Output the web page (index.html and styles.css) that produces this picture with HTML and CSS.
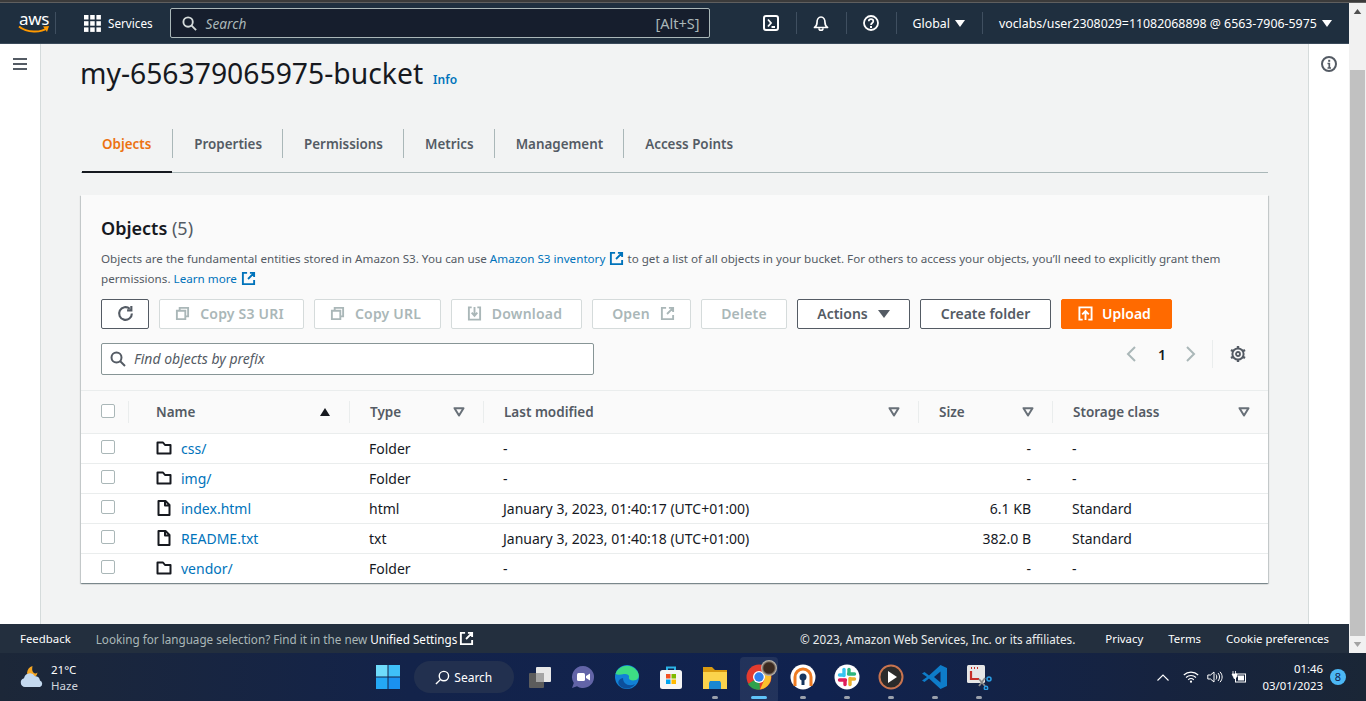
FILE: index.html
```html
<!DOCTYPE html>
<html lang="en">
<head>
<meta charset="utf-8">
<title>my-656379065975-bucket</title>
<link rel="stylesheet" href="styles.css">
</head>
<body>
<svg class="defs" width="0" height="0" aria-hidden="true">
  <symbol id="ext" viewBox="0 0 16 16"><path d="M6.500 2H2v12h12V9.500M9.500 2H14v4.500M14 2L7.500 8.500" fill="none" stroke="currentColor" stroke-width="2"/></symbol>
  <symbol id="folder" viewBox="0 0 16 16"><path d="M1.500 2.500h5.500l2 2.500h5.500v8.500H1.500z" fill="none" stroke="#16191f" stroke-width="2" stroke-linejoin="round"/></symbol>
  <symbol id="file" viewBox="0 0 16 16"><path d="M2.500 1h7l4 4v10h-11zM9 1v4.500h4.500" fill="none" stroke="#16191f" stroke-width="2" stroke-linejoin="round"/></symbol>
  <symbol id="copy" viewBox="0 0 16 16"><path d="M5 5V2h9v9h-3M2 5h9v9H2z" fill="none" stroke="currentColor" stroke-width="2"/></symbol>
  <symbol id="filter" viewBox="0 0 12 10"><path d="M1.500 1.200h9L6 8.500z" fill="none" stroke="#687078" stroke-width="2" stroke-linejoin="round"/></symbol>
</svg>
<div class="screen">
  <div class="strip"></div>
  <div class="browser">
    <div class="app">
      <header class="nav">
        <div class="logo"><span class="logo-text">aws</span><svg class="smile" viewBox="0 0 32 10" width="32" height="10"><path d="M1 1.500C9 8 23 8 29 3" fill="none" stroke="#f90" stroke-width="2"/><path d="M25 1.500l6-.5-2 6z" fill="#f90"/></svg></div>
        <div class="nav-sep logo-sep"></div>
        <svg class="grid-icon" viewBox="0 0 17 17" width="17" height="17"><g fill="#fff"><rect width="4.500" height="4.500"/><rect x="6.200" width="4.500" height="4.500"/><rect x="12.400" width="4.500" height="4.500"/><rect y="6.200" width="4.500" height="4.500"/><rect x="6.200" y="6.200" width="4.500" height="4.500"/><rect x="12.400" y="6.200" width="4.500" height="4.500"/><rect y="12.400" width="4.500" height="4.500"/><rect x="6.200" y="12.400" width="4.500" height="4.500"/><rect x="12.400" y="12.400" width="4.500" height="4.500"/></g></svg>
        <span class="nav-link services">Services</span>
        <div class="nav-search">
          <svg viewBox="0 0 16 16" width="15" height="15"><circle cx="6.500" cy="6.500" r="5" fill="none" stroke="#d5dbdb" stroke-width="2"/><path d="M10 10l5 5" stroke="#d5dbdb" stroke-width="2"/></svg>
          <span class="nav-search-text">Search</span>
          <span class="nav-search-key">[Alt+S]</span>
        </div>
        <div class="nav-right">
          <span class="nav-icon"><svg viewBox="0 0 16 16" width="16" height="16"><rect x="1" y="1" width="14" height="14" rx="2" fill="none" stroke="#fff" stroke-width="2"/><path d="M5 4.500L8 8l-3 3.500M8.500 12H12" fill="none" stroke="#fff" stroke-width="1.800"/></svg></span>
          <div class="nav-sep"></div>
          <span class="nav-icon"><svg viewBox="0 0 16 16" width="16" height="16"><path d="M1.500 12.500c1.500-1 2.500-2 2.500-5 0-3 1.500-5.500 4-5.500s4 2.500 4 5.500c0 3 1 4 2.500 5zM6 13.500c0 2.500 4 2.500 4 0" fill="none" stroke="#fff" stroke-width="1.700" stroke-linejoin="round"/></svg></span>
          <div class="nav-sep"></div>
          <span class="nav-icon"><svg viewBox="0 0 16 16" width="16" height="16"><circle cx="8" cy="8" r="7" fill="none" stroke="#fff" stroke-width="1.800"/><path d="M5.800 6.200C5.800 3.500 10.300 3.500 10.300 6.200c0 1.800-2.300 1.800-2.300 3.800" fill="none" stroke="#fff" stroke-width="1.700"/><rect x="7" y="11" width="2" height="2" fill="#fff"/></svg></span>
          <div class="nav-sep"></div>
          <span class="nav-link region">Global<i class="caret"></i></span>
          <div class="nav-sep"></div>
          <span class="nav-link user">voclabs/user2308029=11082068898 @ 6563-7906-5975<i class="caret"></i></span>
        </div>
      </header>
      <div class="body">
        <aside class="rail rail-left">
          <svg viewBox="0 0 14 12" width="14" height="12"><path d="M0 1h14M0 6h14M0 11h14" stroke="#545b64" stroke-width="2"/></svg>
        </aside>
        <main class="content">
          <div class="title-row">
            <h1 class="title">my-656379065975-bucket</h1>
            <a class="info">Info</a>
          </div>
          <nav class="tabs">
            <span class="tab active">Objects</span>
            <span class="tab">Properties</span>
            <span class="tab">Permissions</span>
            <span class="tab">Metrics</span>
            <span class="tab">Management</span>
            <span class="tab">Access Points</span>
          </nav>
          <section class="card">
            <div class="card-head">
              <h2 class="card-title">Objects <span class="count">(5)</span></h2>
              <p class="desc">Objects are the fundamental entities stored in Amazon S3. You can use <a class="link">Amazon S3 inventory <svg class="ext-icon" width="15" height="15"><use href="#ext"/></svg></a> to get a list of all objects in your bucket. For others to access your objects, you’ll need to explicitly grant them permissions. <a class="link">Learn more <svg class="ext-icon" width="15" height="15"><use href="#ext"/></svg></a></p>
              <div class="toolbar">
                <button class="btn b-refresh"><svg viewBox="0 0 16 16" width="17" height="17"><path d="M14 8a6 6 0 1 1-2-4.500" fill="none" stroke="#545b64" stroke-width="2"/><path d="M13.500 1v4h-4" fill="none" stroke="#545b64" stroke-width="2"/></svg></button>
                <button class="btn off b-s3"><svg width="15" height="15"><use href="#copy"/></svg>Copy S3 URI</button>
                <button class="btn off b-url"><svg width="15" height="15"><use href="#copy"/></svg>Copy URL</button>
                <button class="btn off b-dl"><svg viewBox="0 0 16 16" width="15" height="15"><path d="M5 1.500H2v13h12v-13h-3M8 1v9M5 7l3 3.500L11 7" fill="none" stroke="currentColor" stroke-width="2"/></svg>Download</button>
                <button class="btn off b-open">Open<svg width="15" height="15"><use href="#ext"/></svg></button>
                <button class="btn off b-del">Delete</button>
                <button class="btn b-act">Actions<i class="caret dark"></i></button>
                <button class="btn b-new">Create folder</button>
                <button class="btn primary b-up"><svg viewBox="0 0 16 16" width="15" height="15"><path d="M5 14.500H1.500v-13h13v13H11M8 15V6M4.500 9L8 5.500 11.500 9" fill="none" stroke="#fff" stroke-width="2"/></svg>Upload</button>
              </div>
              <div class="filter-row">
                <div class="filter">
                  <svg viewBox="0 0 16 16" width="16" height="16"><circle cx="6.500" cy="6.500" r="5" fill="none" stroke="#545b64" stroke-width="2"/><path d="M10 10l5 5" stroke="#545b64" stroke-width="2"/></svg>
                  <span>Find objects by prefix</span>
                </div>
                <div class="pager">
                  <svg viewBox="0 0 10 16" width="10" height="16"><path d="M9 1L2 8l7 7" fill="none" stroke="#aab7b8" stroke-width="2"/></svg>
                  <span class="page">1</span>
                  <svg viewBox="0 0 10 16" width="10" height="16"><path d="M1 1l7 7-7 7" fill="none" stroke="#aab7b8" stroke-width="2"/></svg>
                  <div class="pager-sep"></div>
                  <svg class="gear" viewBox="0 0 16 16" width="16" height="16"><circle cx="8" cy="8" r="2" fill="none" stroke="#545b64" stroke-width="1.800"/><circle cx="8" cy="8" r="5.600" fill="none" stroke="#545b64" stroke-width="2"/><path d="M8 0v2.500M8 13.500V16M1 4l2.200 1.300M12.800 10.700L15 12M1 12l2.200-1.300M12.800 5.300L15 4" stroke="#545b64" stroke-width="2.400"/></svg>
                </div>
              </div>
            </div>
            <table class="objects">
              <colgroup><col class="c-check"><col class="c-name"><col class="c-type"><col class="c-date"><col class="c-size"><col class="c-class"></colgroup>
              <thead>
                <tr>
                  <th><i class="box"></i></th>
                  <th><div class="th"><span>Name</span><i class="sort"></i></div></th>
                  <th><div class="th"><span>Type</span><svg width="12" height="10"><use href="#filter"/></svg></div></th>
                  <th><div class="th"><span>Last modified</span><svg width="12" height="10"><use href="#filter"/></svg></div></th>
                  <th><div class="th"><span>Size</span><svg width="12" height="10"><use href="#filter"/></svg></div></th>
                  <th><div class="th"><span>Storage class</span><svg width="12" height="10"><use href="#filter"/></svg></div></th>
                </tr>
              </thead>
              <tbody>
                <tr><td><i class="box"></i></td><td><div class="cell-name"><svg width="16" height="16"><use href="#folder"/></svg><a class="link">css/</a></div></td><td>Folder</td><td>-</td><td class="num">-</td><td>-</td></tr>
                <tr><td><i class="box"></i></td><td><div class="cell-name"><svg width="16" height="16"><use href="#folder"/></svg><a class="link">img/</a></div></td><td>Folder</td><td>-</td><td class="num">-</td><td>-</td></tr>
                <tr><td><i class="box"></i></td><td><div class="cell-name"><svg width="16" height="16"><use href="#file"/></svg><a class="link">index.html</a></div></td><td>html</td><td>January 3, 2023, 01:40:17 (UTC+01:00)</td><td class="num">6.1 KB</td><td>Standard</td></tr>
                <tr><td><i class="box"></i></td><td><div class="cell-name"><svg width="16" height="16"><use href="#file"/></svg><a class="link">README.txt</a></div></td><td>txt</td><td>January 3, 2023, 01:40:18 (UTC+01:00)</td><td class="num">382.0 B</td><td>Standard</td></tr>
                <tr><td><i class="box"></i></td><td><div class="cell-name"><svg width="16" height="16"><use href="#folder"/></svg><a class="link">vendor/</a></div></td><td>Folder</td><td>-</td><td class="num">-</td><td>-</td></tr>
              </tbody>
            </table>
          </section>
        </main>
        <aside class="rail rail-right">
          <svg viewBox="0 0 16 16" width="16" height="16"><circle cx="8" cy="8" r="7" fill="none" stroke="#545b64" stroke-width="2"/><path d="M6.500 7.500H8.300V12M6.500 12h3.500" fill="none" stroke="#545b64" stroke-width="1.700"/><rect x="7.200" y="3.800" width="2" height="2" fill="#545b64"/></svg>
        </aside>
      </div>
      <footer class="foot">
        <span class="foot-link feedback">Feedback</span>
        <span class="foot-note">Looking for language selection? Find it in the new <span class="foot-link">Unified Settings</span></span>
        <svg class="foot-ext" width="15" height="15"><use href="#ext"/></svg>
        <span class="foot-copy">© 2023, Amazon Web Services, Inc. or its affiliates.</span>
        <span class="foot-link">Privacy</span>
        <span class="foot-link">Terms</span>
        <span class="foot-link">Cookie preferences</span>
      </footer>
    </div>
    <div class="scrollbar">
      <svg class="arrow" viewBox="0 0 9 6" width="9" height="6"><path d="M4.500 0L9 6H0z" fill="#505050"/></svg>
      <div class="track"><div class="thumb"></div></div>
      <svg class="arrow" viewBox="0 0 9 6" width="9" height="6"><path d="M0 0h9L4.500 6z" fill="#a3a3a3"/></svg>
    </div>
  </div>
  <div class="taskbar">
    <div class="weather">
      <svg viewBox="0 0 26 26" width="26" height="26"><path d="M8 9a6.500 6.500 0 0 0 5 5c3 0 5-2 5.500-5.500-2 1.500-3.500 1-4.500-.5s-1-3-.5-6C10 3 8.500 5.500 8 9z" fill="#f5a623"/><path d="M6 23a4.500 4.500 0 0 1-1-8.800 6 6 0 0 1 11-2 5 5 0 0 1 5 4.300A3.500 3.500 0 0 1 21 23z" fill="#c4d9ef"/></svg>
      <div class="weather-text"><span>21°C</span><span class="haze">Haze</span></div>
    </div>
    <div class="dock">
      <svg class="dock-win" viewBox="0 0 24 24" width="24" height="24"><rect width="11.500" height="11.500" fill="#6fdcfb"/><rect x="12.500" width="11.500" height="11.500" fill="#3fc0f8"/><rect y="12.500" width="11.500" height="11.500" fill="#24a8f5"/><rect x="12.500" y="12.500" width="11.500" height="11.500" fill="#1a91f0"/></svg>
      <div class="pill"><svg viewBox="0 0 16 16" width="15" height="15"><circle cx="9.500" cy="6.500" r="5" fill="none" stroke="#fff" stroke-width="1.500"/><path d="M6 10l-5 5" stroke="#fff" stroke-width="1.500"/></svg><span>Search</span></div>
      <span class="app-icon"><svg viewBox="0 0 26 26" width="26" height="26"><rect x="9" y="3" width="15" height="15" rx="1" fill="#e8e8e8"/><rect x="2" y="9" width="15" height="15" rx="1" fill="#5c5c5c"/><rect x="9" y="9" width="8" height="9" fill="#a5a5a5"/></svg></span>
      <span class="app-icon"><svg viewBox="0 0 26 26" width="26" height="26"><path d="M13 2a11 11 0 1 1-6 20.200L2 24l1.800-5A11 11 0 0 1 13 2z" fill="#6264a7"/><rect x="7" y="9" width="8" height="8" rx="1.500" fill="#fff"/><path d="M16 12l4-2.500v7L16 14z" fill="#fff"/></svg></span>
      <span class="app-icon"><svg viewBox="0 0 26 26" width="26" height="26"><circle cx="13" cy="13" r="12" fill="#1281d6"/><path d="M1.500 10C4 2 16-2 23 7c2.500 3 2.500 8-1 9-4 1-8 0-7-3 .5-2-2-3.500-5-3-3 .5-6 1.500-8.500 0z" fill="#3ddc84"/><path d="M9 14c0 6 6 9 12 6-3 5-11 6-15 2-3-3-2-7 3-8z" fill="#0c4f9c"/></svg></span>
      <span class="app-icon"><svg viewBox="0 0 26 26" width="26" height="26"><path d="M9 7V3.500h8V7" fill="none" stroke="#2bb3e8" stroke-width="2"/><rect x="2" y="6" width="22" height="19" rx="2.500" fill="#f5f5f5"/><rect x="8" y="10" width="4.500" height="4.500" fill="#f25022"/><rect x="13.500" y="10" width="4.500" height="4.500" fill="#7fba00"/><rect x="8" y="15.500" width="4.500" height="4.500" fill="#00a4ef"/><rect x="13.500" y="15.500" width="4.500" height="4.500" fill="#ffb900"/></svg></span>
      <span class="app-icon"><svg viewBox="0 0 26 26" width="26" height="26"><path d="M1 3h9l3 3h12v19H1z" fill="#d99a10"/><path d="M1 8h24v17H1z" fill="#fbd34c"/><path d="M8 17h10l1 2v6H7v-6z" fill="#1a87d1"/></svg><i class="dot"></i></span>
      <span class="app-icon active"><svg viewBox="0 0 26 26" width="26" height="26"><circle cx="13" cy="13" r="12.500" fill="#e33b2e"/><path d="M13 13L2 20A12.500 12.500 0 0 0 14 25.500z" fill="#2fa24b"/><path d="M13 8h11A12.500 12.500 0 0 1 14 25.500L19 14z" fill="#fbc02d"/><circle cx="13" cy="13" r="6" fill="#fff"/><circle cx="13" cy="13" r="4.700" fill="#2f80ed"/></svg><i class="avatar"></i><i class="dot wide"></i></span>
      <span class="app-icon"><svg viewBox="0 0 26 26" width="26" height="26"><circle cx="13" cy="13" r="12.500" fill="#fff"/><path d="M5 22V13a8 8 0 0 1 16 0v9" fill="none" stroke="#ee7b22" stroke-width="3"/><circle cx="13" cy="13" r="3.500" fill="#16355e"/><rect x="11.500" y="14" width="3" height="7" fill="#16355e"/></svg><i class="dot"></i></span>
      <span class="app-icon"><svg viewBox="0 0 26 26" width="26" height="26"><circle cx="13" cy="13" r="12.500" fill="#fff"/><g stroke-width="3.400" stroke-linecap="round" fill="none"><path d="M10 5.500v6" stroke="#36c5f0"/><path d="M5.500 11h4" stroke="#36c5f0"/><path d="M20.500 10h-6" stroke="#2eb67d"/><path d="M15 5.500v4" stroke="#2eb67d"/><path d="M16 20.500v-6" stroke="#ecb22e"/><path d="M20.500 15h-4" stroke="#ecb22e"/><path d="M5.500 16h6" stroke="#e01e5a"/><path d="M11 20.500v-4" stroke="#e01e5a"/></g></svg><i class="dot"></i></span>
      <span class="app-icon"><svg viewBox="0 0 26 26" width="26" height="26"><circle cx="13" cy="13" r="11.500" fill="#2b2b2b" stroke="#c9744f" stroke-width="2"/><path d="M10 7l9 6-9 6z" fill="#fff"/></svg><i class="dot"></i></span>
      <span class="app-icon"><svg viewBox="0 0 26 26" width="26" height="26"><path d="M18.500 1L25 4v18l-6.500 3L7 14.500 2.500 18 0 16.500 5 13 0 9.500 2.500 8 7 11.500z" fill="#0e7cc9"/><path d="M18.500 7.500L12 13l6.500 5.500z" fill="#0f2350"/></svg><i class="dot"></i></span>
      <span class="app-icon"><svg viewBox="0 0 26 26" width="26" height="26"><rect x="1" y="1" width="18" height="18" rx="1.500" fill="#e6e6e6"/><path d="M5 4h1M8 4h1M11 4h1M5 7v8h8" stroke="#c62f28" stroke-width="2.200" fill="none"/><path d="M13 15l6 7M19 14l-6 8" stroke="#8a8a8a" stroke-width="1.800"/><circle cx="23" cy="15" r="2" fill="none" stroke="#2b9fe6" stroke-width="1.500"/><circle cx="20" cy="24" r="1.700" fill="none" stroke="#2b9fe6" stroke-width="1.500"/></svg><i class="dot"></i></span>
    </div>
    <div class="tray">
      <svg class="chev" viewBox="0 0 12 7" width="12" height="7"><path d="M.5 6.500L6 1l5.500 5.500" fill="none" stroke="#fff" stroke-width="1.100"/></svg>
      <svg viewBox="0 0 16 12" width="16" height="12"><path d="M.8 4a10.500 10.500 0 0 1 14.400 0M3 6.500a7.300 7.300 0 0 1 10 0M5.200 8.800a4 4 0 0 1 5.600 0" fill="none" stroke="#fff" stroke-width="1.100"/><circle cx="8" cy="10.700" r="1.100" fill="#fff"/></svg>
      <svg viewBox="0 0 16 12" width="16" height="12"><path d="M.8 4H3.500L7 1v10L3.500 8H.8z" fill="none" stroke="#fff"/><path d="M9 3.500c1 1.500 1 3.500 0 5M11 2c2 2.500 2 5.500 0 8M13 .8c2.800 3 2.800 7.400 0 10.400" fill="none" stroke="#fff"/></svg>
      <svg viewBox="0 0 16 12" width="16" height="12"><path d="M2 0v3M4.500 0v3M1 3h5v2.500L3.500 8z" fill="#fff" stroke="#fff" stroke-width=".8"/><rect x="4.500" y="3" width="10" height="8" fill="none" stroke="#fff"/><rect x="7" y="4.500" width="6" height="5" fill="#fff"/></svg>
      <div class="clock"><span>01:46</span><span>03/01/2023</span></div>
      <span class="badge">8</span>
    </div>
  </div>
</div>
</body>
</html>
```
FILE: styles.css
```css
* { box-sizing: border-box; }
html, body { margin: 0; height: 100%; overflow: hidden; }
body { font-family: "Noto Sans", "Open Sans", sans-serif; color: #16191f; font-size: 14px; background: #fff; }
.defs { position: absolute; }
a { color: #0073bb; text-decoration: none; }
i { display: block; }
.screen { height: 701px; display: flex; flex-direction: column; }
.strip { height: 3px; background: #3b3b3b; border-bottom: 1px solid #5f5f5f; flex: none; }
.browser { height: 650px; display: flex; flex: none; }
.app { flex: 1; min-width: 0; display: flex; flex-direction: column; }

.nav { height: 41px; flex: none; background: #1f2f3f; border-bottom: 1px solid #3a4a5a; display: flex; align-items: center; color: #fff; padding-left: 18px; }
.logo { width: 32px; display: flex; flex-direction: column; align-items: center; }
.logo-text { font-size: 17px; line-height: 13px; height: 14px; letter-spacing: -.3px; }
.smile { margin-top: -1px; }
.nav-sep { width: 1px; height: 22px; background: #3f4f60; flex: none; }
.logo-sep { margin: 0 28px 0 5px; }
.grid-icon { flex: none; }
.nav-link { font-size: 12.350px; white-space: nowrap; display: flex; align-items: center; }
.services { margin: 0 17px 0 7px; font-size: 11.700px; }
.nav-search { width: 540px; height: 30px; background: #161e2d; border: 1px solid #aab7b8; border-radius: 2px; display: flex; align-items: center; padding: 0 9px 0 11px; gap: 9px; color: #aab7b8; font-size: 13.700px; }
.nav-search-text { font-style: italic; flex: 1; }
.nav-search-key { font-size: 14.500px; }
.nav-right { display: flex; align-items: center; flex: 1; padding-left: 53px; }
.nav-icon { width: 16px; height: 16px; display: block; margin: 0 17px 0 16px; }
.nav-icon svg { display: block; }
.nav-icon:first-child { margin-left: 0; }
.region { padding: 0 17px 0 16px; }
.user { padding-left: 16px; }
.caret { width: 0; height: 0; border-left: 5px solid transparent; border-right: 5px solid transparent; border-top: 7px solid #fff; margin-left: 5px; }

.body { flex: 1; min-height: 0; display: flex; }
.rail { width: 41px; flex: none; background: #fff; display: flex; justify-content: center; padding-top: 12px; align-items: flex-start; }
.rail-left { border-right: 1px solid #d5dbdb; padding-top: 14px; }
.rail-right { border-left: 1px solid #d5dbdb; }
.content { flex: 1; min-width: 0; background: #f2f3f3; padding: 0 40px 0 39px; }
.title-row { display: flex; align-items: baseline; height: 40px; padding-top: 11px; }
.title { font-size: 28.300px; line-height: 36px; font-weight: 400; margin: 0; }
.info { font-size: 12px; margin-left: 10px; font-weight: 600; }
.tabs { margin: 44px 0 0 1px; height: 45px; display: flex; align-items: flex-start; padding-top: 1px; border-bottom: 1px solid #aab7b8; }
.tab { height: 29px; display: flex; align-items: center; padding: 0 20px 0 21px; font-size: 13.400px; font-weight: 600; color: #545b64; border-left: 1px solid #aab7b8; }
.tab:first-child { border-left: 0; }
.tab.active { color: #ec7211; height: 44px; padding: 0 21px 13px 20px; margin-left: 1px; border-bottom: 2px solid #16191f; }
.card { margin: 22px 0 0 1px; background: #fff; box-shadow: 0 1px 1px 0 rgba(0,28,36,.3), 1px 1px 1px 0 rgba(0,28,36,.15), -1px 1px 1px 0 rgba(0,28,36,.15); }
.card-head { background: #fafafa; padding: 19px 20px 15px; border-bottom: 1px solid #eaeded; height: 196px; }
.card-title { margin: 0; font-size: 18px; line-height: 28px; font-weight: 600; }
.count { font-weight: 400; color: #545b64; }
.desc { margin: 7px 0 0; font-size: 11.650px; line-height: 20px; color: #545b64; }
.ext-icon { vertical-align: -3px; margin-left: 1px; }
.toolbar { display: flex; gap: 10px; margin-top: 10px; }
.btn { height: 30px; padding: 0 0 2px; font: 600 14px "Noto Sans", sans-serif; background: #fff; color: #545b64; border: 1px solid #545b64; border-radius: 2px; display: flex; align-items: center; justify-content: center; gap: 10px; }
.btn svg { flex: none; }
.btn.off { color: #aab7b8; border-color: #d5dbdb; letter-spacing: .2px; }
.btn.primary { background: #ff6a00; border-color: #ff6a00; color: #fff; }
.b-refresh { width: 48px; }
.b-s3 { width: 145px; padding-right: 4px; }
.b-url { width: 127px; padding-right: 4px; }
.b-dl { width: 131px; padding-right: 4px; }
.b-open { width: 99px; padding-left: 4px; }
.b-del { width: 86px; }
.b-act { width: 113px; gap: 10px; }
.caret.dark { border-top-color: #545b64; border-left-width: 6px; border-right-width: 6px; border-top-width: 8px; margin: 2px 0 0; }
.b-new { width: 131px; }
.b-up { width: 111px; gap: 9px; padding-right: 4px; }
.filter-row { display: flex; margin-top: 14px; justify-content: space-between; }
.filter { width: 493px; height: 32px; border: 1px solid #879596; border-radius: 2px; background: #fff; display: flex; align-items: center; gap: 8px; padding: 0 8px 1px; font-size: 14px; font-style: italic; color: #545b64; }
.pager { display: flex; align-items: center; height: 24px; margin-top: -1px; }
.page { font-size: 14px; font-weight: 600; margin: 0 20px 0 22px; }
.pager-sep { width: 1px; height: 28px; background: #eaeded; margin: 0 17px 0 16px; }
.gear { margin-right: 2px; }

.objects { width: 100%; border-collapse: collapse; table-layout: fixed; font-size: 14px; }
.c-check { width: 47px; }
.c-name { width: 221px; }
.c-type { width: 134px; }
.c-date { width: 435px; }
.c-size { width: 134px; }
.c-class { width: 216px; }
.objects th { height: 42px; padding: 0; background: #fafafa; border-bottom: 1px solid #eaeded; text-align: left; font-size: 13.500px; font-weight: 600; color: #545b64; }
.objects th:first-child, .objects td:first-child { padding-left: 20px; }
.th { height: 22px; border-left: 1px solid #eaeded; display: flex; align-items: center; justify-content: space-between; padding: 0 18px 0 20px; }
.objects th:nth-child(2) .th { padding: 0 19px 0 27px; }
.sort { width: 0; height: 0; border-left: 5.500px solid transparent; border-right: 5.500px solid transparent; border-bottom: 8px solid #16191f; }
.objects td { height: 30px; padding: 0 0 0 20px; border-bottom: 1px solid #eaeded; color: #16191f; }
.objects tr:last-child td { border-bottom: 0; }
.objects td.num { text-align: right; padding: 0 21px 0 0; }
.box { width: 14px; height: 14px; border: 1px solid #aab7b8; border-radius: 2px; background: #fff; margin-top: -2px; }
.cell-name { display: flex; align-items: center; gap: 9px; padding-left: 8px; }
.cell-name svg { flex: none; }

.foot { height: 29px; flex: none; background: #232f3e; color: #d5dbdb; display: flex; align-items: center; font-size: 11.700px; padding-left: 20px; }
.foot-link { color: #fff; white-space: nowrap; }
.foot > .foot-link { font-size: 11.400px; }
.foot > .feedback { margin-right: 25px; }
.foot-note { color: #aab7b8; white-space: nowrap; }
.foot-ext { color: #fff; margin: 0 auto 0 2px; }
.foot-copy { color: #eaeded; margin-right: 30px; white-space: nowrap; }
.foot > .foot-link:nth-last-child(2) { margin: 0 25px; }
.foot > .foot-link:last-child { margin-right: 20px; }

.scrollbar { width: 17px; flex: none; background: #f1f1f1; display: flex; flex-direction: column; align-items: center; padding: 6px 0; }
.track { flex: 1; width: 100%; padding: 56px 0 0; margin: 0 0 6px; }
.thumb { height: 566px; background: #c1c1c1; width: 15px; margin: 0 auto; }

.taskbar { flex: 1; min-height: 0; background: linear-gradient(90deg, #1c2738 0, #13234a 30%, #10224f 60%, #16233f 85%, #1a2636 100%); display: flex; align-items: center; color: #fff; font-size: 12px; }
.weather { width: 376px; padding-left: 19px; display: flex; align-items: center; gap: 6px; flex: none; }
.weather-text { display: flex; flex-direction: column; font-size: 11.500px; line-height: 16px; margin-top: 1px; }
.haze { color: #d0d5dd; }
.dock { display: flex; align-items: center; gap: 17.800px; flex: none; }
.dock-win { margin-right: -4px; }
.pill { width: 100px; height: 32px; border-radius: 16px; background: #22304f; display: flex; align-items: center; justify-content: center; gap: 4px; margin-right: -5px; }
.app-icon { position: relative; width: 26px; height: 26px; display: block; }
.app-icon svg { display: block; }
.app-icon.active { margin-right: 1px; }
.app-icon.active::before { content: ""; position: absolute; inset: -7px -6px -13px; background: rgba(255,255,255,.08); border-radius: 4px; }
.app-icon.active svg { position: relative; }
.dot { position: absolute; bottom: -9px; left: 10px; width: 6px; height: 3px; border-radius: 2px; background: #9aa0ab; }
.dot.wide { left: 5px; width: 16px; background: #60c4f8; }
.avatar { position: absolute; top: -4px; right: -5px; width: 16px; height: 16px; border-radius: 50%; background: radial-gradient(circle, #3b2a20 45%, #b8b0a5 65%); }
.tray { margin-left: auto; display: flex; align-items: center; gap: 8px; padding-right: 20px; }
.chev { margin-right: 6px; }
.clock { display: flex; flex-direction: column; align-items: flex-end; line-height: 17px; font-size: 11.400px; margin: 0 -1px 0 8px; width: 60px; white-space: nowrap; }
.badge { width: 16px; height: 16px; border-radius: 50%; background: #4cb8f5; color: #10224f; font-size: 11px; line-height: 16px; text-align: center; }
```
